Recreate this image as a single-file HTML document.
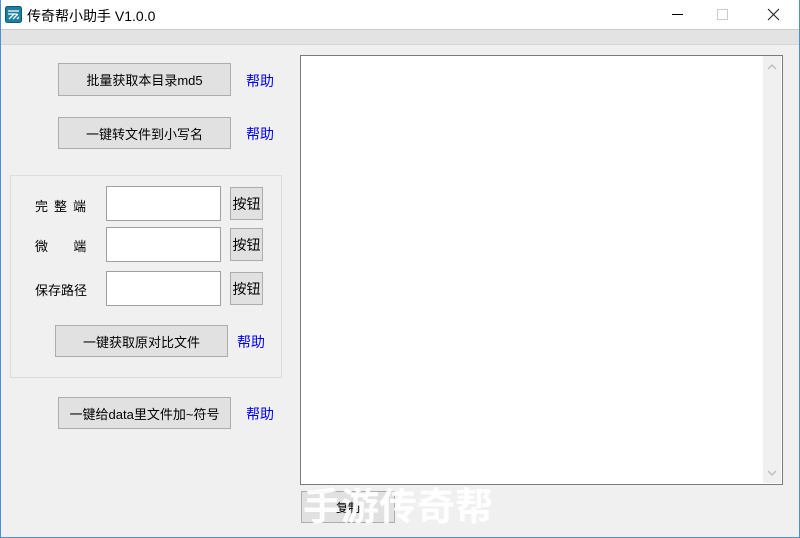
<!DOCTYPE html>
<html><head><meta charset="utf-8"><style>
*{margin:0;padding:0;box-sizing:border-box}
body{width:800px;height:538px;background:#f0f0f0;font-family:"Liberation Sans","Noto Sans CJK SC",sans-serif;font-size:13px;color:#000;position:relative;overflow:hidden}
.a{position:absolute}
.title{left:0;top:0;width:800px;height:29px;background:#fff}
.btn{position:absolute;background:#e1e1e1;border:1px solid #adadad;display:flex;align-items:center;justify-content:center;font-size:13px}
.help{position:absolute;color:#0000ff;font-size:14px}
.inp{position:absolute;background:#fff;border:1px solid #a0a0a0;width:115px;height:35px;left:106px}
.lbl{position:absolute;left:35px;font-size:13px}
</style></head><body>
<div class="a title"></div>
<svg class="a" style="left:5px;top:6px" width="17" height="17" viewBox="0 0 17 17"><rect x="0.5" y="0.5" width="16" height="16" rx="2" fill="#1d7fa0" stroke="#0d5a75"/><path d="M3 5h11M3 8l9 0M4 13l5-5M8 13l5-5M12 13l2-2" stroke="#fff" stroke-width="1.3" fill="none"/></svg>
<div class="a" style="left:27px;top:6px;font-size:14px">传奇帮小助手 V1.0.0</div>
<div class="a" style="left:672px;top:14px;width:11px;height:1px;background:#000"></div>
<div class="a" style="left:717px;top:9px;width:11px;height:11px;border:1px solid #ccc"></div>
<svg class="a" style="left:767px;top:8px" width="13" height="13"><path d="M1 1L12 12M12 1L1 12" stroke="#222" stroke-width="1.1"/></svg>
<div class="a" style="left:1px;top:29px;width:798px;height:16px;background:#e3e3e3;border-top:1px solid #ccc;border-bottom:1px solid #d5d5d5"></div>

<div class="btn" style="left:58px;top:63px;width:173px;height:33px">批量获取本目录md5</div>
<div class="help" style="left:246px;top:71px">帮助</div>
<div class="btn" style="left:58px;top:117px;width:173px;height:32px">一键转文件到小写名</div>
<div class="help" style="left:246px;top:124px">帮助</div>

<div class="a" style="left:10px;top:175px;width:272px;height:203px;border:1px solid #dcdcdc"></div>
<div class="lbl" style="top:196px;letter-spacing:6px">完整端</div>
<div class="lbl" style="top:236px">微&nbsp;&nbsp;&nbsp;&nbsp;&nbsp;&nbsp;&nbsp;端</div>
<div class="lbl" style="top:280px">保存路径</div>
<div class="inp" style="top:186px"></div>
<div class="inp" style="top:227px"></div>
<div class="inp" style="top:271px"></div>
<div class="btn" style="left:230px;top:187px;width:33px;height:33px;font-size:14px">按钮</div>
<div class="btn" style="left:230px;top:228px;width:33px;height:33px;font-size:14px">按钮</div>
<div class="btn" style="left:230px;top:272px;width:33px;height:33px;font-size:14px">按钮</div>
<div class="btn" style="left:55px;top:325px;width:173px;height:32px">一键获取原对比文件</div>
<div class="help" style="left:237px;top:332px">帮助</div>

<div class="btn" style="left:58px;top:397px;width:173px;height:32px">一键给data里文件加~符号</div>
<div class="help" style="left:246px;top:404px">帮助</div>

<div class="a" style="left:300px;top:55px;width:483px;height:430px;background:#fff;border:1px solid #7a7a7a"></div>
<div class="a" style="left:763px;top:56px;width:18px;height:427px;background:#f0f0f0"></div>
<svg class="a" style="left:766px;top:63px" width="12" height="8"><path d="M2 6l4-4 4 4" stroke="#bbb" stroke-width="1.3" fill="none"/></svg>
<svg class="a" style="left:766px;top:469px" width="12" height="8"><path d="M2 2l4 4 4-4" stroke="#bbb" stroke-width="1.3" fill="none"/></svg>

<div class="btn" style="left:301px;top:491px;width:94px;height:32px;font-size:12px">复制</div>
<div class="a" style="left:303px;top:486px;font-size:38px;font-weight:bold;color:rgba(255,255,255,0.93);line-height:44px;white-space:nowrap">手游传奇帮</div>
<div class="a" style="left:0;top:0;width:1px;height:538px;background:#4a90d9"></div>
<div class="a" style="left:799px;top:0;width:1px;height:538px;background:#4a90d9"></div>
<div class="a" style="left:0;top:537px;width:800px;height:1px;background:#4a90d9"></div>
</body></html>
